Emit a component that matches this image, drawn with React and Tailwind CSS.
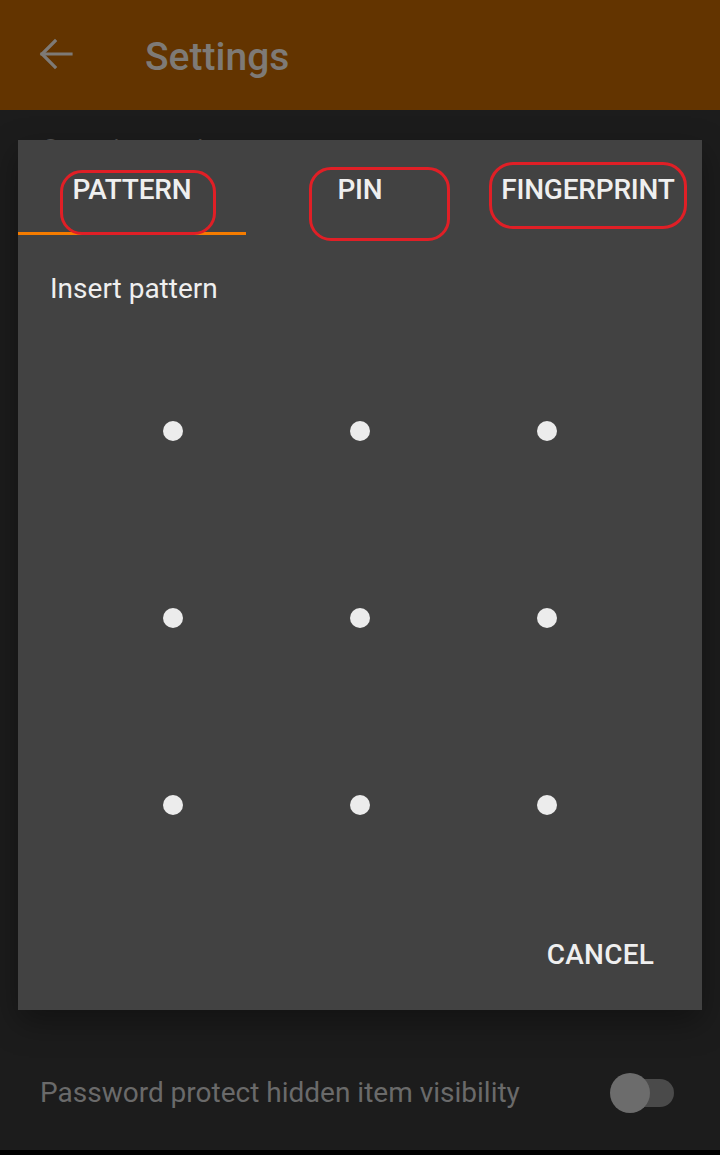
import React from "react";

export default function App() {
  const dots = Array.from({ length: 9 });
  return (
    <div className="relative w-[720px] h-[1155px] overflow-hidden bg-[#1c1c1c]" style={{ fontFamily: "Roboto, 'Noto Sans', sans-serif" }}>
      {/* Header */}
      <div className="h-[110px] bg-[#633400] flex items-center">
        <svg width="34" height="32" viewBox="0 0 34 32" className="ml-[39px] mb-[3px]" fill="none" stroke="#7e7a76" strokeWidth="3.2" strokeLinecap="square">
          <path d="M3 16 H32" />
          <path d="M16 3 L3 16 L16 29" />
        </svg>
        <span className="ml-[72px] text-[39px] font-medium text-[#7e7a76] leading-none mt-[5px]">Settings</span>
      </div>

      {/* Background content */}
      <div className="flex flex-col">
        <div className="pl-[42px] pt-[23px] text-[28px] text-[#555555] leading-[34px]">Security settings</div>
        <div className="mt-[876px] h-[100px] flex items-center justify-between pl-[40px] pr-[46px]">
          <span className="text-[28px] text-[#6a6a6a] tracking-[0px]">Password protect hidden item visibility</span>
          <div className="relative w-[64px] h-[40px] flex items-center">
            <div className="absolute left-[18px] w-[46px] h-[28px] rounded-full bg-[#4a4a4a]" />
            <div className="absolute left-0 w-[40px] h-[40px] rounded-full bg-[#6c6c6c]" />
          </div>
        </div>
      </div>
      <div className="absolute left-0 bottom-0 w-full h-[5px] bg-black" />

      {/* Dialog */}
      <div className="absolute left-[18px] top-[140px] w-[684px] h-[870px] bg-[#424242] shadow-[0_12px_30px_rgba(0,0,0,0.35)] flex flex-col">
        <div className="relative grid grid-cols-3 h-[95px]">
          <div className="relative flex items-start justify-center pt-[33px]">
            <span className="text-[28px] font-medium text-[#efefef] leading-[34px] tracking-[-0.2px]">PATTERN</span>
            <div className="absolute left-0 bottom-0 w-full h-[3px] bg-[#f57c00]" />
          </div>
          <div className="flex items-start justify-center pt-[33px]">
            <span className="text-[28px] font-medium text-[#efefef] leading-[34px] tracking-[-0.2px]">PIN</span>
          </div>
          <div className="flex items-start justify-center pt-[33px]">
            <span className="text-[28px] font-medium text-[#efefef] leading-[34px] tracking-[-0.2px]">FINGERPRINT</span>
          </div>
          {/* Annotation ovals */}
          <div className="absolute left-[42px] top-[30px] w-[156px] h-[65px] rounded-[22px] border-[3px] border-[#e01f26]" />
          <div className="absolute left-[291px] top-[27px] w-[141px] h-[74px] rounded-[22px] border-[3px] border-[#e01f26]" />
          <div className="absolute left-[471px] top-[22px] w-[198px] h-[67px] rounded-[24px] border-[3px] border-[#e01f26]" />
        </div>

        <div className="mt-[38px] pl-[32px] text-[28px] text-[#efefef] leading-[32px]">Insert pattern</div>

        <div className="mt-[32px] ml-[62px] w-[560px] grid grid-cols-3">
          {dots.map((_, i) => (
            <div key={i} className="h-[187px] flex items-center justify-center">
              <div className="w-[20px] h-[20px] rounded-full bg-[#ececec]" />
            </div>
          ))}
        </div>

        <div className="mt-[40px] flex justify-end pr-[48px]">
          <span className="text-[28px] font-medium text-[#efefef] leading-[34px] tracking-[0.2px]">CANCEL</span>
        </div>
      </div>
    </div>
  );
}
